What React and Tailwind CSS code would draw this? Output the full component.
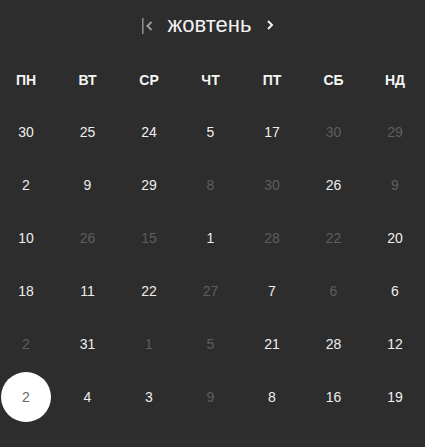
import React from "react";

const headers = ["ПН", "ВТ", "СР", "ЧТ", "ПТ", "СБ", "НД"];
// [value, dim]
const rows = [
  [["30"], ["25"], ["24"], ["5"], ["17"], ["30", 1], ["29", 1]],
  [["2"], ["9"], ["29"], ["8", 1], ["30", 1], ["26"], ["9", 1]],
  [["10"], ["26", 1], ["15", 1], ["1"], ["28", 1], ["22", 1], ["20"]],
  [["18"], ["11"], ["22"], ["27", 1], ["7"], ["6", 1], ["6"]],
  [["2", 1], ["31"], ["1", 1], ["5", 1], ["21"], ["28"], ["12"]],
  [["2", 0, 1], ["4"], ["3"], ["9", 1], ["8"], ["16"], ["19"]],
];

export default function App() {
  return (
    <div
      className="w-[425px] h-[447px] bg-[#2d2d2d] overflow-hidden"
      style={{ fontFamily: '"Liberation Sans", Arial, sans-serif' }}
    >
      <div className="h-[50px] flex items-center justify-center pr-[9px]">
        <svg width="12" height="18" viewBox="0 0 12 18" className="mr-[14px] mt-[1px]">
          <rect x="0" y="1" width="1.6" height="16" fill="#8a8a8a" />
          <path d="M9.5 5 L5.5 9 L9.5 13" stroke="#9a9a9a" strokeWidth="2" fill="none" />
        </svg>
        <span className="text-[22px] leading-none text-[#f2f2f2] -mt-[1px]">жовтень</span>
        <svg width="8" height="12" viewBox="0 0 8 12" className="ml-[15px]">
          <path d="M2 2 L6 6 L2 10" stroke="#f2f2f2" strokeWidth="2" fill="none" />
        </svg>
      </div>
      <div className="pt-[5px] pl-[1px]">
        <div className="grid grid-cols-[repeat(7,50px)] gap-x-[11.5px] mb-[2px]">
          {headers.map((h) => (
            <div key={h} className="h-[50px] flex items-center justify-center text-[14px] font-bold text-[#f5f5f5]">
              {h}
            </div>
          ))}
        </div>
        <div className="grid grid-cols-[repeat(7,50px)] gap-x-[11.5px] gap-y-[3px]">
          {rows.flat().map(([v, dim, sel], i) => (
            <div
              key={i}
              className={
                "h-[50px] flex items-center justify-center text-[14px] " +
                (sel
                  ? "rounded-full bg-white text-[#666666]"
                  : dim
                  ? "text-[#5e5e5e]"
                  : "text-[#eeeeee]")
              }
            >
              {v}
            </div>
          ))}
        </div>
      </div>
    </div>
  );
}
